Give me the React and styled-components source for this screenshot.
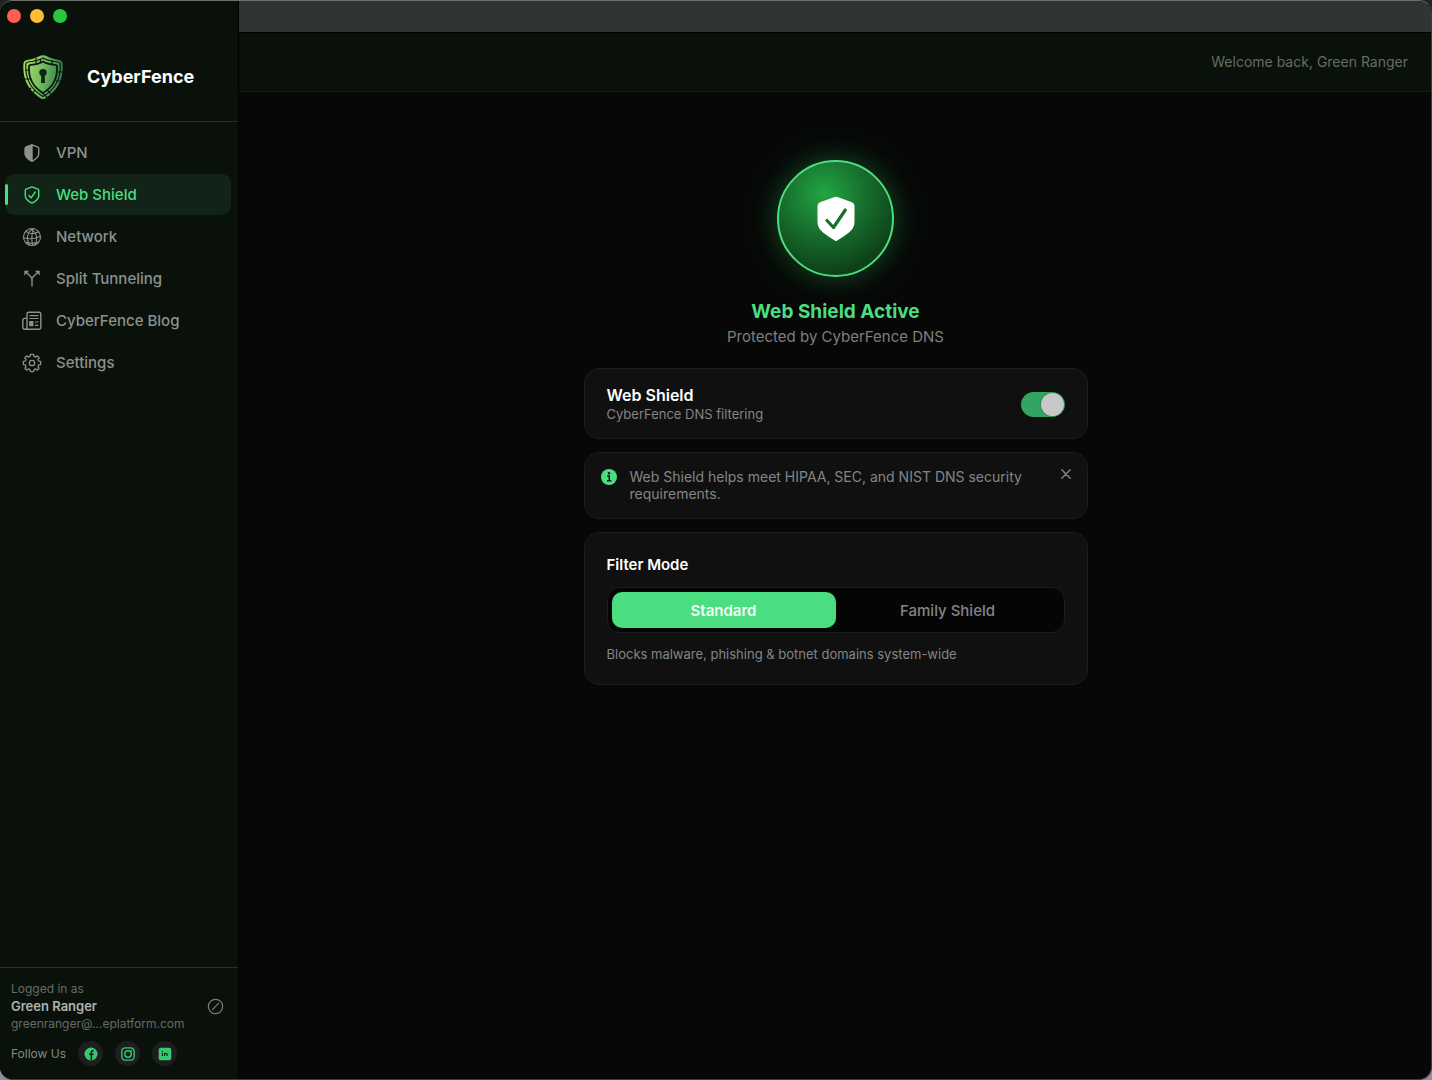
/**
 *
 * Web Shield
 *
 */

import React, { useState } from 'react';
import styled, { createGlobalStyle } from 'styled-components';

const GlobalStyle = createGlobalStyle`
  * {
    box-sizing: border-box;
  }
  body {
    margin: 0;
    background: linear-gradient(#1f2425, #8c929c);
    font-family: Inter, 'Liberation Sans', sans-serif;
    -webkit-font-smoothing: antialiased;
  }
  button {
    font-family: inherit;
    border: 0;
    padding: 0;
    background: none;
    cursor: pointer;
  }
  h1, h2, h3, p {
    margin: 0;
  }
`;

const Window = styled.div`
  display: flex;
  min-height: 100vh;
  border: 1px solid #3a3e3d;
  border-left: 0;
  border-top-color: #6b6f6e;
  border-radius: 13px;
  overflow: hidden;
  background: #070707;
`;

const Sidebar = styled.aside`
  display: flex;
  flex-direction: column;
  flex: none;
  width: 239px;
  background: #0a110b;
  border-right: 1px solid #000;
`;

const Lights = styled.div`
  display: flex;
  gap: 9px;
  padding: 8px 7px;
`;

const Light = styled.button`
  width: 14px;
  height: 14px;
  border-radius: 50%;
  background: ${(props) => props.$color};
`;

const Brand = styled.div`
  display: flex;
  align-items: center;
  gap: 23px;
  height: 91px;
  padding: 1px 22px 0;
  border-bottom: 1px solid #22342a;
`;

const BrandName = styled.h1`
  font-size: 18px;
  line-height: 24px;
  font-weight: 700;
  color: #fff;
`;

const Nav = styled.nav`
  display: flex;
  flex-direction: column;
  flex: 1;
  gap: 1px;
  padding: 10px 7px 10px 5px;
`;

const NavLink = styled.a`
  position: relative;
  display: flex;
  align-items: center;
  gap: 14px;
  height: 41px;
  padding: 0 17px;
  border-radius: 9px;
  font-size: 15px;
  font-weight: 500;
  text-decoration: none;
  color: ${(props) => (props.$active ? '#4ade80' : '#8d918d')};
  background: ${(props) => (props.$active ? '#112417' : 'transparent')};

  &::before {
    content: '';
    display: ${(props) => (props.$active ? 'block' : 'none')};
    position: absolute;
    left: 0;
    top: 10px;
    width: 3px;
    height: 21px;
    border-radius: 2px;
    background: #4ade80;
  }
`;

const Account = styled.footer`
  padding: 12px 11px 13px;
  border-top: 1px solid #22342a;
  color: #666b67;
  font-size: 12px;
  line-height: 17px;
`;

const AccountRow = styled.div`
  display: flex;
  align-items: center;
  justify-content: space-between;
  padding-right: 3px;
`;

const AccountName = styled.p`
  font-size: 13px;
  line-height: 18px;
  font-weight: 600;
  color: #b0b3b0;
`;

const SignOut = styled.button`
  display: flex;
  color: #7c807d;
`;

const Follow = styled.div`
  display: flex;
  align-items: center;
  gap: 12px;
  margin-top: 9px;
  color: #858986;
`;

const Social = styled.a`
  display: flex;
  align-items: center;
  justify-content: center;
  width: 25px;
  height: 25px;
  border-radius: 50%;
  background: #1c1f1d;
  color: #38c872;
`;

const Content = styled.div`
  display: flex;
  flex-direction: column;
  flex: 1;
`;

const TitleBar = styled.div`
  height: 32px;
  background: #303534;
  border-bottom: 1px solid #000;
`;

const TopBar = styled.header`
  display: flex;
  align-items: center;
  justify-content: flex-end;
  height: 59px;
  padding: 0 23px 2px;
  background: #0a110b;
  border-bottom: 1px solid #0f1c13;
  font-size: 14px;
  color: #666b67;
`;

const Main = styled.main`
  display: flex;
  flex-direction: column;
  align-items: center;
  padding: 68px 24px 24px 25px;
`;

const Orb = styled.div`
  display: flex;
  align-items: center;
  justify-content: center;
  width: 117px;
  height: 117px;
  border: 2px solid #4ade80;
  border-radius: 50%;
  background: radial-gradient(circle at 40% 28%, #22a643 0%, #17702e 38%, #0e4119 75%, #0d3816 100%);
  box-shadow: 0 0 24px rgba(40, 160, 70, 0.36), 0 0 60px rgba(34, 120, 60, 0.22);
`;

const Status = styled.h2`
  margin-top: 22px;
  font-size: 19px;
  line-height: 26px;
  font-weight: 700;
  color: #4ade80;
`;

const StatusNote = styled.p`
  margin-top: 2px;
  font-size: 15px;
  line-height: 20px;
  color: #7f7f7f;
`;

const Cards = styled.div`
  display: flex;
  flex-direction: column;
  gap: 13px;
  width: 100%;
  max-width: 504px;
  margin-top: 21px;
`;

const Card = styled.section`
  padding: ${(props) => props.$padding};
  background: #101010;
  border: 1px solid #17211a;
  border-radius: 15px;
`;

const ToggleRow = styled.label`
  display: flex;
  align-items: center;
  justify-content: space-between;
`;

const ToggleTitle = styled.h3`
  font-size: 16px;
  line-height: 20px;
  font-weight: 600;
  color: #fff;
`;

const Small = styled.p`
  font-size: 13px;
  line-height: 18px;
  color: #858585;
`;

const Switch = styled.input`
  appearance: none;
  display: flex;
  align-items: center;
  width: 44px;
  height: 25px;
  margin: 0;
  padding: 0 1px;
  border-radius: 13px;
  background: #3a3a3a;
  cursor: pointer;

  &::before {
    content: '';
    width: 23px;
    height: 23px;
    border-radius: 50%;
    background: #c8c8c8;
    box-shadow: 0 0 2px rgba(0, 0, 0, 0.5);
  }

  &:checked {
    justify-content: flex-end;
    background: #33a562;
  }
`;

const Notice = styled.div`
  display: flex;
  align-items: flex-start;
  gap: 13px;
  color: #4ade80;

  svg {
    margin-top: 1px;
  }
`;

const NoticeText = styled.p`
  flex: 1;
  font-size: 14px;
  line-height: 17px;
  color: #858585;
`;

const Close = styled.button`
  display: flex;
  color: #858585;
`;

const Segmented = styled.div`
  display: flex;
  height: 46px;
  margin: 12px 0;
  padding: 4px;
  background: #050505;
  border: 1px solid #14201a;
  border-radius: 13px;
`;

const Segment = styled.button`
  flex: 1;
  border-radius: 10px;
  font-size: 15px;
  font-weight: ${(props) => (props.$active ? 600 : 500)};
  color: ${(props) => (props.$active ? '#f0fff5' : '#858585')};
  background: ${(props) => (props.$active ? '#4ade80' : 'transparent')};
`;

const FilterTitle = styled.h3`
  font-size: 15px;
  line-height: 20px;
  font-weight: 600;
  color: #fff;
`;

const Svg = ({ size = 20, children }) => (
  <svg
    width={size}
    height={size}
    viewBox="0 0 20 20"
    fill="none"
    stroke="currentColor"
    strokeWidth="1.4"
    strokeLinecap="round"
    strokeLinejoin="round"
    aria-hidden="true"
  >
    {children}
  </svg>
);

const SHIELD = 'M10 1.9 L16 4.1 Q16.7 4.4 16.7 5.2 V11 Q16.7 14.6 10 18.2 Q3.3 14.6 3.3 11 V5.2 Q3.3 4.4 4 4.1 Z';

const HalfShieldIcon = () => (
  <Svg>
    <path d={SHIELD} />
    <path d="M10 1.9 L4 4.1 Q3.3 4.4 3.3 5.2 V11 Q3.3 14.6 10 18.2 Z" fill="currentColor" />
  </Svg>
);

const CheckShieldIcon = () => (
  <Svg>
    <path d={SHIELD} />
    <path d="M6.9 10.5 L9.1 12.9 L13.2 7" />
  </Svg>
);

const GlobeIcon = () => (
  <Svg>
    <g strokeWidth="1.1">
      <circle cx="10" cy="10" r="8.5" />
      <path d="M11.4 1.6 C4.8 4.6 4 12.4 7.4 18.1 M8 1.7 C14.6 4.2 16.4 11.4 12.8 18 M11.4 1.6 C9.6 6.5 9.4 12.5 10.6 18.4 M1.6 10.8 Q9.8 13.4 18.4 9.2 M3.8 4.4 Q9.5 8.6 16.6 4.8 M3.4 15.2 Q9.8 17 16.6 15.2" />
    </g>
  </Svg>
);

const SplitIcon = () => (
  <Svg>
    <path d="M10 17 V11 Q10 9 8.6 7.6 L4.4 3.4 M10 11 Q10 9 11.4 7.6 L15.6 3.4" strokeWidth="1.4" />
    <path d="M2.8 2 H6.5 L2.8 5.7 Z M17.2 2 H13.5 L17.2 5.7 Z" fill="currentColor" strokeWidth="0.6" />
  </Svg>
);

const NewsIcon = () => (
  <Svg>
    <path d="M5 16.2 V3.2 Q5 1.3 6.9 1.3 H16.9 Q18.8 1.3 18.8 3.2 V16.3 Q18.8 18.2 16.9 18.2 H2.7 Q.8 18.2 .8 16.3 V9.3 Q.8 7.4 2.7 7.4 H5 M5 16.2 Q5 18.2 3 18.2" />
    <path d="M7.8 4.7 H16 M7.8 7.5 H16 M13.4 11 H16 M13.4 14.3 H16" strokeWidth="1.2" />
    <rect x="7.8" y="10.8" width="3" height="3.7" fill="currentColor" />
  </Svg>
);

const GearIcon = () => (
  <Svg>
    <path d="M8.4 1.4 H11.6 L12.1 3.5 L13.4 4.1 L15.2 2.9 L17.1 4.8 L15.9 6.6 L16.5 7.9 L18.6 8.4 V11.6 L16.5 12.1 L15.9 13.4 L17.1 15.2 L15.2 17.1 L13.4 15.9 L12.1 16.5 L11.6 18.6 H8.4 L7.9 16.5 L6.6 15.9 L4.8 17.1 L2.9 15.2 L4.1 13.4 L3.5 12.1 L1.4 11.6 V8.4 L3.5 7.9 L4.1 6.6 L2.9 4.8 L4.8 2.9 L6.6 4.1 L7.9 3.5 Z" strokeWidth="1.3" />
    <circle cx="10" cy="10" r="2.7" strokeWidth="1.3" />
  </Svg>
);

const SignOutIcon = () => (
  <Svg size={17}>
    <circle cx="10" cy="10" r="8.4" />
    <path d="M6.4 13.6 L13.6 6.4" />
  </Svg>
);

const FacebookIcon = () => (
  <Svg size={14}>
    <circle cx="10" cy="10" r="9.3" fill="currentColor" stroke="none" />
    <path d="M14 5.4 H12.5 Q10.5 5.4 10.5 7.6 V19 M7.4 10.4 H13.6" stroke="#1c1f1d" strokeWidth="2.4" strokeLinecap="butt" />
  </Svg>
);

const InstagramIcon = () => (
  <Svg size={14}>
    <rect x="1.2" y="1.2" width="17.6" height="17.6" rx="5" strokeWidth="2" />
    <circle cx="10" cy="10" r="4.6" strokeWidth="2" />
    <circle cx="15" cy="5" r="1.2" fill="currentColor" stroke="none" />
  </Svg>
);

const LinkedinIcon = () => (
  <Svg size={14}>
    <rect x="1" y="1" width="18" height="18" rx="3" fill="currentColor" stroke="none" />
    <path d="M6.3 8.6 V13 M9.3 8.4 V13 M9.3 10.4 Q9.6 8.9 11.2 8.9 Q13 8.9 13 10.8 V13" stroke="#1c1f1d" strokeWidth="1.7" strokeLinecap="butt" />
    <circle cx="6.3" cy="6.4" r="1" fill="#1c1f1d" stroke="none" />
  </Svg>
);

const Logo = () => (
  <svg width="42" height="46" viewBox="0 0 42 46" fill="none" aria-hidden="true">
    <defs>
      <linearGradient id="logo" x1="0" y1="0" x2="1" y2="0.2">
        <stop offset="0" stopColor="#b4dd62" />
        <stop offset="0.5" stopColor="#76bf62" />
        <stop offset="1" stopColor="#37824a" />
      </linearGradient>
    </defs>
    <path
      d="M1.5 9 Q2 6.5 5 6 Q14 4.5 17 2.2 Q21 .4 25 2.2 Q28 4.5 37 6 Q40 6.5 40.5 9 Q42.5 33 23 44.4 Q21 45.6 19 44.4 Q-.5 33 1.5 9 Z"
      fill="url(#logo)"
    />
    <g stroke="#0a180d" strokeWidth="1.2">
      <path d="M3.8 9.6 Q4 8.4 6 8 Q17 6.6 21 4 Q25 6.6 36 8 Q38 8.4 38.2 9.6 Q39.5 32 21 42.4 Q2.5 32 3.8 9.6 Z" />
      <path d="M7 12.6 Q7 11 9 10.8 Q17 10 21 7.4 Q25 10 33 10.8 Q35 11 35 12.6 Q36 30 21 39 Q6 30 7 12.6 Z" strokeWidth="1.8" />
      <path d="M14 4 V9.5 M18.4 5 V8.6 M30 6 V10 M3 16 H7 M1 25 H8 M36 18 H41 M34 27 H39 M9 34 L6 37 M18 37 L26 44 M25 36 L30 41 M13 36 L10 40" />
    </g>
    <circle cx="21" cy="18.6" r="3.7" fill="#0d2414" />
    <path d="M19.4 20 H22.6 L23 29 H19 Z" fill="#0d2414" />
  </svg>
);

const BigShield = () => (
  <svg width="38" height="46" viewBox="0 0 38 46" fill="none" aria-hidden="true">
    <path
      d="M17.6 1 Q19 .4 20.4 1 L35 6.3 Q37.5 7.2 37.5 10 V26 Q37.5 32 32 36.5 Q27 40.5 19 45.2 Q11 40.5 6 36.5 Q.5 32 .5 26 V10 Q.5 7.2 3 6.3 Z"
      fill="#fff"
    />
    <path d="M10 24.5 L16.5 31.5 L28.3 14" stroke="#17702f" strokeWidth="3.2" strokeLinecap="round" strokeLinejoin="round" />
  </svg>
);

const InfoIcon = () => (
  <svg width="16" height="16" viewBox="0 0 16 16" fill="none" aria-hidden="true">
    <circle cx="8" cy="8" r="8" fill="currentColor" />
    <circle cx="8" cy="4.3" r="1.2" fill="#101010" />
    <path d="M6.2 7 H8.3 V11.7 M6 11.8 H10.4" stroke="#101010" strokeWidth="1.4" />
  </svg>
);

const CloseIcon = () => (
  <svg width="10" height="10" viewBox="0 0 10 10" stroke="currentColor" strokeWidth="1.4" strokeLinecap="round" aria-hidden="true">
    <path d="M.8 .8 L9.2 9.2 M9.2 .8 L.8 9.2" />
  </svg>
);

const PAGES = [
  { label: 'VPN', Icon: HalfShieldIcon },
  { label: 'Web Shield', Icon: CheckShieldIcon },
  { label: 'Network', Icon: GlobeIcon },
  { label: 'Split Tunneling', Icon: SplitIcon },
  { label: 'CyberFence Blog', Icon: NewsIcon },
  { label: 'Settings', Icon: GearIcon },
];

const App = () => {
  const [page, setPage] = useState('Web Shield');
  const [enabled, setEnabled] = useState(true);
  const [notice, setNotice] = useState(true);
  const [mode, setMode] = useState('Standard');

  return (
    <Window>
      <GlobalStyle />
      <Sidebar>
        <Lights>
          <Light $color="#ff5f57" aria-label="Close window" />
          <Light $color="#febc2e" aria-label="Minimize window" />
          <Light $color="#28c840" aria-label="Zoom window" />
        </Lights>
        <Brand>
          <Logo />
          <BrandName>CyberFence</BrandName>
        </Brand>
        <Nav>
          {PAGES.map(({ label, Icon }) => (
            <NavLink key={label} href="#" $active={label === page} onClick={() => setPage(label)}>
              <Icon />
              {label}
            </NavLink>
          ))}
        </Nav>
        <Account>
          <p>Logged in as</p>
          <AccountRow>
            <AccountName>Green Ranger</AccountName>
            <SignOut aria-label="Sign out">
              <SignOutIcon />
            </SignOut>
          </AccountRow>
          <p>greenranger@...eplatform.com</p>
          <Follow>
            <span>Follow Us</span>
            <Social href="#" aria-label="Facebook"><FacebookIcon /></Social>
            <Social href="#" aria-label="Instagram"><InstagramIcon /></Social>
            <Social href="#" aria-label="LinkedIn"><LinkedinIcon /></Social>
          </Follow>
        </Account>
      </Sidebar>
      <Content>
        <TitleBar />
        <TopBar>Welcome back, Green Ranger</TopBar>
        <Main>
          <Orb>
            <BigShield />
          </Orb>
          <Status>Web Shield Active</Status>
          <StatusNote>Protected by CyberFence DNS</StatusNote>
          <Cards>
            <Card $padding="16px 22px 15px">
              <ToggleRow>
                <div>
                  <ToggleTitle>Web Shield</ToggleTitle>
                  <Small>CyberFence DNS filtering</Small>
                </div>
                <Switch type="checkbox" checked={enabled} onChange={() => setEnabled(!enabled)} />
              </ToggleRow>
            </Card>
            {notice &&
              <Card $padding="15px 16px 16px">
                <Notice>
                  <InfoIcon />
                  <NoticeText>
                    Web Shield helps meet HIPAA, SEC, and NIST DNS security requirements.
                  </NoticeText>
                  <Close aria-label="Dismiss" onClick={() => setNotice(false)}>
                    <CloseIcon />
                  </Close>
                </Notice>
              </Card>
            }
            <Card $padding="22px 22px 21px">
              <FilterTitle>Filter Mode</FilterTitle>
              <Segmented>
                {['Standard', 'Family Shield'].map((name) => (
                  <Segment key={name} $active={name === mode} onClick={() => setMode(name)}>
                    {name}
                  </Segment>
                ))}
              </Segmented>
              <Small>Blocks malware, phishing &amp; botnet domains system-wide</Small>
            </Card>
          </Cards>
        </Main>
      </Content>
    </Window>
  );
};

export default App;
